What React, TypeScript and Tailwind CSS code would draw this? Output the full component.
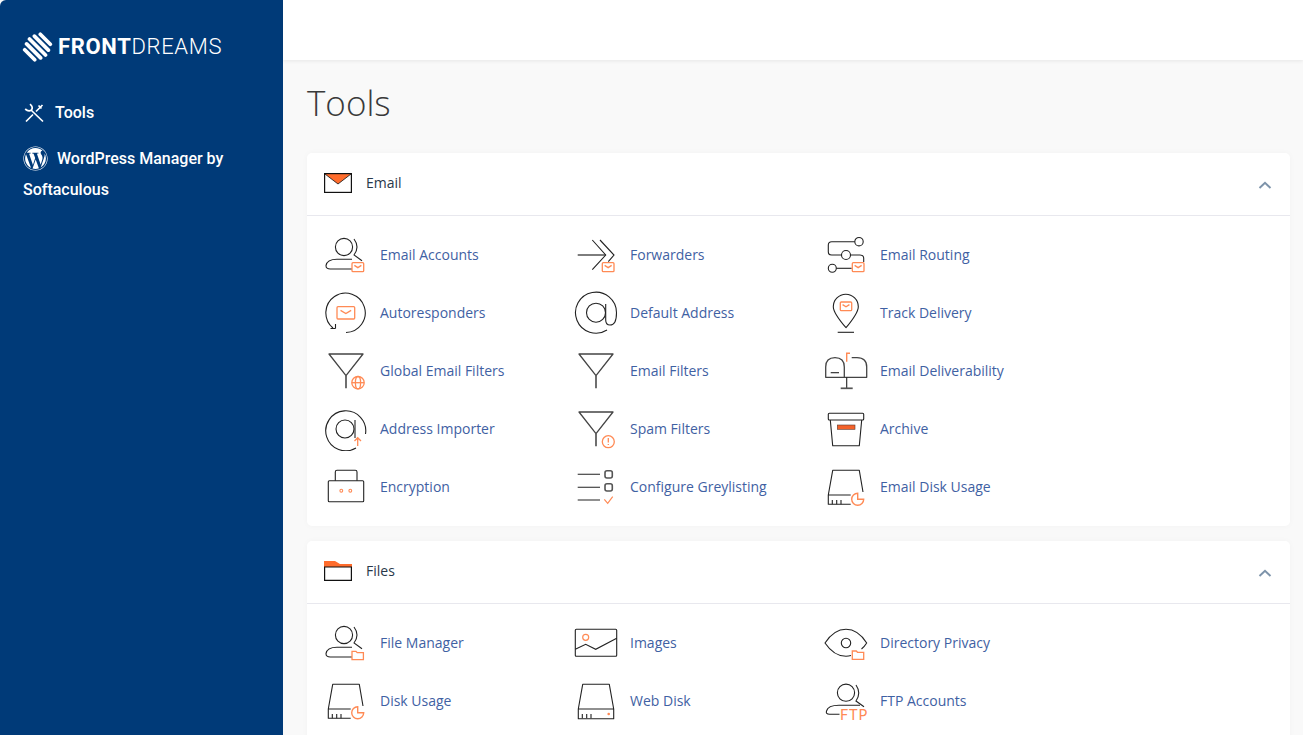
import type { ReactNode } from 'react';
import { FaWordpress } from 'react-icons/fa';

const orange = '#ff8a55';

const Mail = ({ x, y, w = 11.7, h = 9 }: { x: number; y: number; w?: number; h?: number }) => (
    <g stroke={orange} strokeWidth="1.3" fill="none">
        <rect x={x} y={y} width={w} height={h} rx="1" />
        <path d={`M${x + w * 0.2} ${y + h * 0.3} L${x + w / 2} ${y + h * 0.55} L${x + w * 0.8} ${y + h * 0.3}`} />
    </g>
);

const Folder = ({ x, y }: { x: number; y: number }) => (
    <path
        d={`M${x} ${y + 9} V${y + 0.7} H${x + 4} L${x + 5.2} ${y + 2} H${x + 11.4} V${y + 9} Z`}
        stroke={orange}
        strokeWidth="1.3"
        fill="none"
    />
);

const Pie = ({ cx, cy }: { cx: number; cy: number }) => (
    <path
        d={`M${cx} ${cy - 6} A6 6 0 1 0 ${cx + 6} ${cy} H${cx} Z`}
        stroke={orange}
        strokeWidth="1.4"
        fill="none"
    />
);

const Person = ({ children }: { children?: ReactNode }) => (
    <>
        <circle cx="20" cy="14" r="8.6" />
        <path d="M30 6 Q36 14 30 22 L38 27.7" />
        <path d="M28 36 H6.3 Q2 36 2 32.7 Q3 26.3 13 26.3 H28" />
        {children}
    </>
);

const Funnel = ({ children }: { children?: ReactNode }) => (
    <>
        <path d="M5 5 H39 L22 26.7 Z" strokeLinejoin="round" strokeWidth="1.3" stroke="#444" />
        <path d="M22 26.7 V39.3" strokeWidth="1.7" stroke="#555" />
        {children}
    </>
);

const Disk = ({ children, open }: { children?: ReactNode; open?: boolean }) => (
    <>
        {open ? (
            <path d="M26.7 30 H4.3 V39.3 H26.7 M4.3 30 L8.7 5.3 H35.3 L39 27" strokeLinejoin="round" />
        ) : (
            <path d="M4.3 30 H39.7 V39.7 H4.3 Z M4.3 30 L8.7 5.3 H35.3 L39.7 30" strokeLinejoin="round" />
        )}
        <path d="M8.3 35 V39.3 M12.7 35 V39.3 M17 35 V39.3" />
        {children}
    </>
);

const icons: Record<string, ReactNode> = {
    emailAccounts: <Person><Mail x={28} y={29.7} /></Person>,
    forwarders: (
        <>
            <path d="M3.7 22 H31.7" strokeWidth="1.7" stroke="#666" />
            <path d="M18.3 7 L31.7 22 L18.3 36.7 M26 7 L40 22 L34.3 28.7" />
            <Mail x={28.3} y={29.7} />
        </>
    ),
    routing: (
        <>
            <circle cx="35" cy="8.7" r="4.2" />
            <path d="M30.8 8.7 H7.7 Q4.3 8.7 4.3 12 V18.7 Q4.3 22 7.7 22 H17.5" />
            <circle cx="22" cy="22" r="4.5" />
            <path d="M26.5 22 H36 Q39.7 22 39.7 25.3 V29" />
            <circle cx="8.3" cy="35.3" r="4" />
            <path d="M12.3 35.3 H27.7" />
            <Mail x={28.3} y={29.7} />
        </>
    ),
    autoresponders: (
        <>
            <path d="M9 37 A19.7 19.7 0 1 1 22 41.5" />
            <path d="M6.5 37.5 H11.5 M11.5 37.5 V33" strokeWidth="1.1" />
            <Mail x={13} y={15.7} w={17.7} h={12.3} />
        </>
    ),
    defaultAddress: (
        <>
            <circle cx="22" cy="21.7" r="9.5" />
            <path d="M31.7 13 V29 Q31.7 34 36 34 Q42.5 34 42.5 21.7 A20.5 20.5 0 1 0 33 39" />
        </>
    ),
    trackDelivery: (
        <>
            <path d="M22 36.7 Q9.3 22 9.3 15.7 A12.5 12.5 0 0 1 34.3 15.7 Q34.3 22 22 36.7 Z" strokeLinejoin="round" />
            <path d="M13.7 41.3 H30" />
            <Mail x={16.3} y={11} w={11.4} h={8.7} />
        </>
    ),
    globalFilters: (
        <Funnel>
            <g stroke={orange} strokeWidth="1.3" fill="none">
                <circle cx="34" cy="33.7" r="6.2" />
                <ellipse cx="34" cy="33.7" rx="2.6" ry="6.2" />
                <path d="M27.8 33.7 H40.2" />
            </g>
        </Funnel>
    ),
    emailFilters: <Funnel />,
    deliverability: (
        <>
            <path d="M20.3 28.3 H1.7 V18 Q1.7 8.7 11 8.7 Q20.3 8.7 20.3 18 V28.3 H42.7 V18 Q42.7 8.7 33 8.7 H27.7" strokeLinejoin="round" strokeWidth="1.3" stroke="#444" />
            <path d="M6.7 23.7 H15" />
            <path d="M22.7 28.3 V39.3" />
            <path d="M16.7 39.3 H28.7" strokeWidth="1.7" stroke="#555" />
            <path d="M22.7 12.7 V4.3 H26" stroke={orange} strokeWidth="1.4" />
        </>
    ),
    addressImporter: (
        <>
            <circle cx="21" cy="22" r="9" />
            <path d="M31 13 V31" />
            <path d="M32 41 A20 20 0 1 1 41.5 27" />
            <path d="M33.7 39 V30.7 M30.500 34 L33.7 30.7 L37 34" stroke={orange} strokeWidth="1.3" />
        </>
    ),
    spamFilters: (
        <Funnel>
            <g stroke={orange} strokeWidth="1.3" fill="none">
                <circle cx="34.3" cy="34.7" r="6" />
                <path d="M34.3 31 V35.500 M34.3 37 V38" />
            </g>
        </Funnel>
    ),
    archive: (
        <>
            <rect x="4.3" y="6.3" width="35.4" height="6.7" rx="1" />
            <path d="M6.3 13 L8.7 38.7 H35.3 L37.7 13" strokeLinejoin="round" />
            <rect x="13.3" y="18" width="17.7" height="4.3" fill="#f4622a" stroke="#5a3a30" strokeWidth="0.6" />
        </>
    ),
    encryption: (
        <>
            <rect x="4.3" y="15.7" width="35.4" height="21" rx="1" />
            <path d="M11.3 15.7 V7 Q11.3 5.3 13 5.3 H31.3 Q33 5.3 33 7 V15.7" />
            <circle cx="17.3" cy="25.7" r="1.4" stroke={orange} strokeWidth="1.1" />
            <circle cx="26.3" cy="25.7" r="1.4" stroke={orange} strokeWidth="1.1" />
        </>
    ),
    greylisting: (
        <>
            <path d="M3.7 9.3 H26 M3.7 22.3 H26 M3.7 35 H26" />
            <rect x="31" y="5.7" width="7.3" height="7.3" rx="2" strokeWidth="1.6" stroke="#555" />
            <rect x="31" y="18.7" width="7.3" height="7.3" rx="2" strokeWidth="1.6" stroke="#555" />
            <path d="M30.3 34.3 L33.7 38.3 L38.7 31.7" stroke={orange} strokeWidth="1.2" />
        </>
    ),
    emailDisk: <Disk open><Pie cx={33.7} cy={34.3} /></Disk>,
    fileManager: <Person><Folder x={28} y={29.7} /></Person>,
    images: (
        <>
            <rect x="1.3" y="8.3" width="41.4" height="27" rx="1" />
            <circle cx="11.7" cy="16.3" r="3" stroke={orange} strokeWidth="1.2" />
            <path d="M1.3 28.3 L11.7 23.3 L21.7 28.3 L42.7 17.3" />
        </>
    ),
    directoryPrivacy: (
        <>
            <path d="M27 34.500 Q24.500 35.3 22 35.3 Q10 35.3 1 22 Q10 8.3 22 8.3 Q34 8.3 42.7 22 Q40.500 25.500 37.500 28" strokeLinejoin="round" />
            <circle cx="22" cy="22" r="4.7" />
            <Folder x={28.3} y={29.3} />
        </>
    ),
    diskUsage: <Disk open><Pie cx={33.7} cy={33.7} /></Disk>,
    webDisk: <Disk><circle cx="34.7" cy="35" r="1.3" fill={orange} stroke="none" /></Disk>,
    ftp: (
        <>
            <circle cx="22" cy="13.7" r="8.6" />
            <path d="M32 6 Q37.500 14 32 22 L40 27.7" />
            <path d="M15.500 35.3 H5.500 Q1.500 35.3 2.500 32 Q4 26.3 15 26.3 H36" />
            <text x="16" y="41" fontSize="14.500" letterSpacing="0.9" fill={orange} stroke="none" fontFamily="Lato, sans-serif">FTP</text>
        </>
    ),
};

const emailItems = [
    ['Email Accounts', 'emailAccounts'],
    ['Forwarders', 'forwarders'],
    ['Email Routing', 'routing'],
    ['Autoresponders', 'autoresponders'],
    ['Default Address', 'defaultAddress'],
    ['Track Delivery', 'trackDelivery'],
    ['Global Email Filters', 'globalFilters'],
    ['Email Filters', 'emailFilters'],
    ['Email Deliverability', 'deliverability'],
    ['Address Importer', 'addressImporter'],
    ['Spam Filters', 'spamFilters'],
    ['Archive', 'archive'],
    ['Encryption', 'encryption'],
    ['Configure Greylisting', 'greylisting'],
    ['Email Disk Usage', 'emailDisk'],
];

const fileItems = [
    ['File Manager', 'fileManager'],
    ['Images', 'images'],
    ['Directory Privacy', 'directoryPrivacy'],
    ['Disk Usage', 'diskUsage'],
    ['Web Disk', 'webDisk'],
    ['FTP Accounts', 'ftp'],
];

const Section = ({ title, icon, items }: { title: string; icon: ReactNode; items: string[][] }) => (
    <section className="bg-white rounded-[5px] shadow-[0_0_6px_rgba(0,0,0,0.03)] mb-[15px]">
        <div className="h-[63px] flex items-center pl-[17px] pr-[18px] pb-[2px] border-b border-[#e8e8ee]">
            {icon}
            <span className="ml-[14px] text-sm text-[#29384a]">{title}</span>
            <svg className="ml-auto mt-[3px]" width="14" height="8" viewBox="0 0 14 8" fill="none" stroke="#7d93aa" strokeWidth="2">
                <path d="M1.500 7 L7 1.800 L12.500 7" />
            </svg>
        </div>
        <div className="grid grid-cols-[250px_250px_250px] pl-[17px] pt-[10px] pb-[10px]">
            {items.map(([label, key]) => (
                <a key={label} className="h-[58px] flex items-center gap-[12px] text-sm text-[#3f61a3]">
                    <svg width="44" height="44" viewBox="0 0 44 44" fill="none" stroke="#222" strokeWidth="1.1" className="shrink-0">
                        {icons[key]}
                    </svg>
                    {label}
                </a>
            ))}
        </div>
    </section>
);

const App = () => {
    return (
        <div className="h-[735px] w-[1303px] overflow-hidden flex bg-[#f9f9f9] font-['Open_Sans',sans-serif]">
            <aside className="w-[283px] shrink-0 bg-[#003a78] rounded-tl-[6px] text-white font-['Roboto',sans-serif] pl-[23px] pr-4">
                <div className="flex items-center h-[29px] mt-[32px]">
                    <svg width="31" height="30" viewBox="0 0 30 30" fill="none" stroke="#fff" strokeWidth="3.700" strokeLinecap="round" className="-ml-[1px]">
                        <path d="M2.200 17.800 L12.200 27.800 M4.100 11.900 L18.100 25.900 M7 7 L23 23 M11.900 4.100 L25.900 18.100 M17.800 2.200 L27.800 12.200" />
                    </svg>
                    <span className="ml-[5px] text-[22px] leading-none tracking-[0.65px] font-bold">FRONT</span>
                    <span className="text-[22px] leading-none tracking-[0.65px] font-light">DREAMS</span>
                </div>
                <div className="flex items-center mt-[40px] h-[24px] text-base font-medium">
                    <svg width="22" height="22" viewBox="0 0 22 22" fill="none" stroke="#fff" strokeWidth="1.700" className="mr-[10px]">
                        <path d="M7 2.200 Q10.500 5 8.500 8 Q5.500 10 2.200 7" />
                        <path d="M8 8 L20 19.500" />
                        <path d="M3 19.500 L10 12.500 M13 9.500 L19.500 3" />
                        <path d="M15.500 3.500 L18.500 6.500" />
                    </svg>
                    <span>Tools</span>
                </div>
                <div className="mt-[18px] text-base font-medium leading-[31px]">
                    <FaWordpress className="inline-block align-[-7px] text-[25px] mr-[9px]" />
                    WordPress Manager by
                    <br />
                    Softaculous
                </div>
            </aside>
            <div className="flex-1 min-w-0">
                <header className="h-[60px] bg-white shadow-[0_1px_4px_rgba(0,0,0,0.08)]" />
                <main className="pl-[24px] pr-[13px]">
                    <h1 className="text-[35px] font-light text-[#3a3a3a] leading-[50px] mt-[18px] mb-[25px]">Tools</h1>
                    <Section
                        title="Email"
                        items={emailItems}
                        icon={
                            <svg width="28" height="20" viewBox="0 0 28 20" fill="none">
                                <path d="M1 1 H27 L14 11 Z" fill="#ff6c2c" />
                                <rect x="0.600" y="0.600" width="26.800" height="18.800" stroke="#111" strokeWidth="1.200" />
                                <path d="M1 1 L14 11 L27 1" stroke="#111" strokeWidth="0.800" />
                            </svg>
                        }
                    />
                    <Section
                        title="Files"
                        items={fileItems}
                        icon={
                            <svg width="28" height="20" viewBox="0 0 28 20" fill="none">
                                <path d="M0 6 V0 H11 L16 3 H28 V6 Z" fill="#ff6c2c" />
                                <path d="M0.600 6 H27.400 V19.400 H0.600 Z" stroke="#111" strokeWidth="1.200" />
                            </svg>
                        }
                    />
                </main>
            </div>
        </div>
    );
};

export default App;
